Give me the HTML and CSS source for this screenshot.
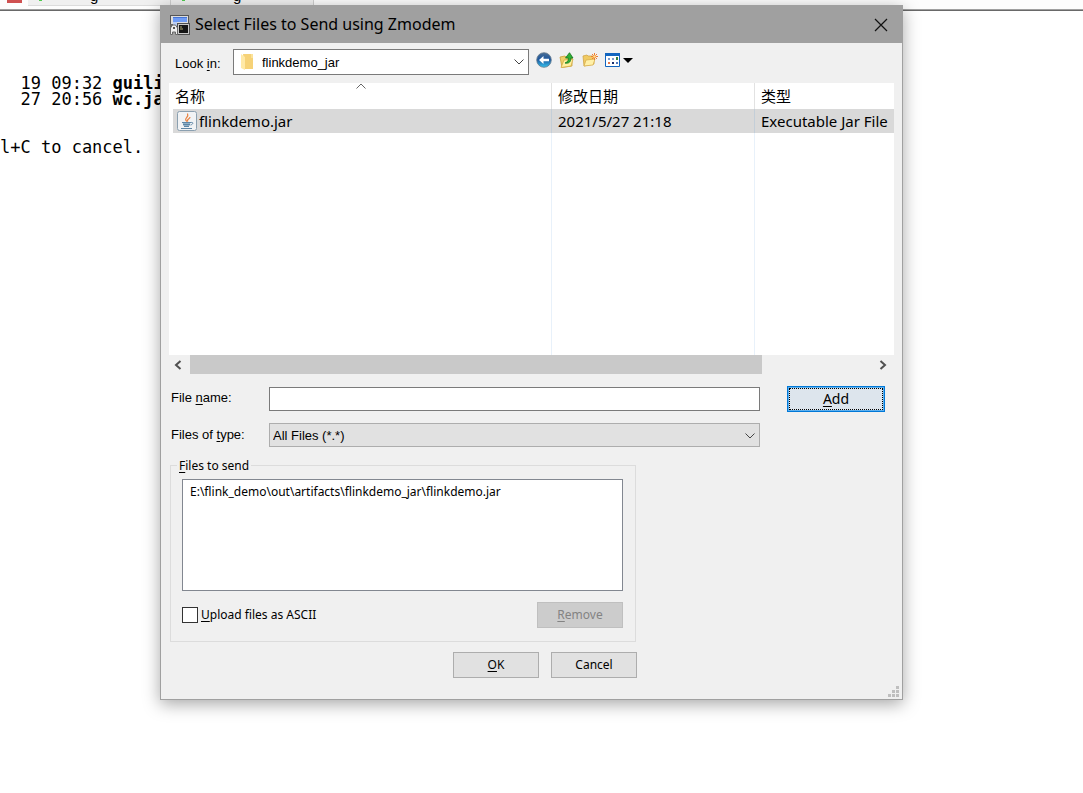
FILE: index.html
```html
<!DOCTYPE html>
<html lang="en">
<head>
<meta charset="utf-8">
<title>Select Files to Send using Zmodem</title>
<link rel="stylesheet" href="styles.css">
</head>
<body>
<div class="tabstrip" aria-hidden="true">
  <span class="stop"></span>
  <span class="tab"><i class="tick"></i><span class="tab-text">g</span></span>
  <span class="tab"><i class="tick"></i><span class="tab-text">g</span></span>
</div>
<pre class="terminal">


  19 09:32 <b>guili</b>
  27 20:56 <b>wc.ja</b>


l+C to cancel.</pre>

<section class="dialog" role="dialog" aria-labelledby="dialog-title">
  <header class="titlebar">
    <svg class="app-icon" width="20" height="20" viewBox="0 0 20 20" aria-hidden="true">
      <path d="M0 0h19v9H0z" fill="#555"/><path d="M1 1h17v8H1z" fill="#ddd"/>
      <path d="M3 2h14v5H3z" fill="#6f9cf5"/><path d="M3 2h14v1H3z" fill="#4674d6"/>
      <path d="M3 7h4v5H3z" fill="#b9cdf5"/><path d="M0 9h3v10H0z" fill="#666"/>
      <rect x="7.500" y="8.500" width="12" height="11" fill="#c9c9c9" stroke="#505050"/>
      <path d="M9 10h9v8H9z" fill="#161616"/>
      <path d="M10 12h2M10 14h3" stroke="#b3ac74"/>
      <path d="M.5 19.500V13l2-3h3l2 3v6.500h-2V17h-3v2.500z" fill="#f0f0f0" stroke="#6a6a6a"/>
      <path d="M3 12h2v2H3z" fill="#555"/>
    </svg>
    <h1 id="dialog-title">Select Files to Send using Zmodem</h1>
    <button class="close" type="button" aria-label="Close">
      <svg width="14" height="14" viewBox="0 0 14 14" aria-hidden="true"><path d="M1 1l12 12M13 1L1 13" stroke="#111" stroke-width="1.200"/></svg>
    </button>
  </header>

  <form class="body">
    <div class="look-row">
      <label for="look-in">Look <u>i</u>n:</label>
      <div class="combo">
        <select id="look-in" class="look-select"><option>flinkdemo_jar</option></select>
        <svg class="folder" width="13" height="18" viewBox="0 0 13 18" aria-hidden="true">
          <path d="M2 1h10v15H4z" fill="#f6d277"/><path d="M10 1h2v4h-2z" fill="#fbe29a"/>
          <path d="M0 1l4 3v13l-4-2z" fill="#ffe9a6"/>
        </svg>
        <svg class="chevron" width="10" height="6" viewBox="0 0 10 6" aria-hidden="true"><path d="M.5.5L5 5 9.500.5" fill="none" stroke="#444"/></svg>
      </div>
      <div class="tools">
        <button type="button" aria-label="Back">
          <svg width="16" height="16" viewBox="0 0 16 16" aria-hidden="true">
            <defs><linearGradient id="ball" x1="0" y1="0" x2="0" y2="1"><stop offset="0" stop-color="#4b6f96"/><stop offset=".45" stop-color="#1c559c"/><stop offset="1" stop-color="#35c2ef"/></linearGradient></defs>
            <circle cx="8" cy="8" r="7.300" fill="url(#ball)" stroke="#64788c" stroke-width=".8"/>
            <path d="M3 8l4.500-4v2.700H13v2.600H7.500V12z" fill="#fff"/>
          </svg>
        </button>
        <button type="button" aria-label="Up one level">
          <svg width="16" height="16" viewBox="0 0 16 16" aria-hidden="true">
            <path d="M1 5l5-1 1 1h6v9l-10 1.500z" fill="#efcf68" stroke="#c9a03a" stroke-width=".8"/>
            <path d="M2 15.500L5 8l9-1-2 7z" fill="#fff0a0" stroke="#d3ab46" stroke-width=".8"/>
            <path d="M6 11c3-1 3.500-3 3.300-5H6.500L10.500.7 14 6h-2.200c.3 3.500-1.800 6-5.800 5z" fill="#2eb135" stroke="#14731d" stroke-width=".8"/>
          </svg>
        </button>
        <button type="button" aria-label="Create new folder">
          <svg width="16" height="16" viewBox="0 0 16 16" aria-hidden="true">
            <path d="M1 4l4-1 1 1h6v8L2 14z" fill="#f0ca62" stroke="#d1a546" stroke-width=".8"/>
            <path d="M2 14l2-6 9-1-2 6z" fill="#fff0a8" stroke="#d9b04e" stroke-width=".8"/>
            <path d="M12.500 1v7M9 4.500h7M10 2l5 5M15 2l-5 5" stroke="#ef7b32"/><circle cx="12.500" cy="4.500" r="1.300" fill="#ffe28d"/>
          </svg>
        </button>
        <button type="button" class="wide" aria-label="View menu">
          <svg width="28" height="16" viewBox="0 0 28 16" aria-hidden="true">
            <path d="M.5 1.500h14v13H.5z" fill="#fff" stroke="#1265bf"/><path d="M0 1h15v3H0z" fill="#1265bf"/>
            <path d="M3 6h2v2H3zM7 6h2v2H7z" fill="#7d9bcb"/><path d="M11 5h2v3h-2z" fill="#36803f"/>
            <path d="M3 10h2v2H3z" fill="#e57749"/><path d="M7 10h2v2H7z" fill="#1b2e6d"/><path d="M11 10h2v2h-2z" fill="#5279bd"/>
            <path d="M18 6h10l-5 5z" fill="#000"/>
          </svg>
        </button>
      </div>
    </div>

    <div class="list">
      <table>
        <colgroup><col class="c-name"><col class="c-date"><col></colgroup>
        <thead lang="zh"><tr><th>名称</th><th>修改日期</th><th>类型</th></tr></thead>
        <tbody>
          <tr class="file"><td><span class="file-name">
            <svg width="20" height="20" viewBox="0 0 20 20" aria-hidden="true">
              <rect x=".5" y=".5" width="19" height="19" rx="2" fill="#f1f3f5" stroke="#8ba0b0"/>
              <path d="M10 10.500c-4-3 2.500-4 .5-8M11 10.500c-2-2 2-2.500 2-4.500" fill="none" stroke="#e9813e" stroke-width="1.200"/>
              <path d="M5.500 11h8l-1 4h-6z" fill="#8fb0c8"/>
              <path d="M5 11.500h9M6 13.500h7M7 15.500h5M4 17.500h11M14 11.500c3-.5 2 2-.5 2.500" fill="none" stroke="#5f87a6"/>
            </svg>flinkdemo.jar</span></td><td>2021/5/27 21:18</td><td>Executable Jar File</td></tr>
          <tr class="rest"><td></td><td></td><td></td></tr>
        </tbody>
      </table>
      <svg class="sort" width="10" height="6" viewBox="0 0 10 6" aria-hidden="true"><path d="M.5 5.500L5 1l4.500 4.500" fill="none" stroke="#666"/></svg>
    </div>
    <div class="scrollbar" aria-hidden="true">
      <svg width="8" height="10" viewBox="0 0 8 10"><path d="M6.500 1L2 5l4.500 4" fill="none" stroke="#505050" stroke-width="2"/></svg>
      <div class="track"><div class="thumb"></div></div>
      <svg width="8" height="10" viewBox="0 0 8 10"><path d="M1.500 1L6 5 1.500 9" fill="none" stroke="#505050" stroke-width="2"/></svg>
    </div>

    <div class="fields">
      <label for="file-name">File <u>n</u>ame:</label>
      <input id="file-name" type="text">
      <button class="btn add" type="button"><span><u>A</u>dd</span></button>
      <label for="file-type">Files of <u>t</u>ype:</label>
      <div class="combo">
        <select id="file-type" class="type-select"><option>All Files (*.*)</option></select>
        <svg class="chevron" width="10" height="6" viewBox="0 0 10 6" aria-hidden="true"><path d="M.5.5L5 5 9.500.5" fill="none" stroke="#444"/></svg>
      </div>
    </div>

    <div class="lower">
      <fieldset>
        <legend><u>F</u>iles to send</legend>
        <select class="queue" size="5" aria-label="Files to send">
          <option>E:\flink_demo\out\artifacts\flinkdemo_jar\flinkdemo.jar</option>
        </select>
        <div class="queue-actions">
          <label class="ascii"><input type="checkbox"><span><u>U</u>pload files as ASCII</span></label>
          <button class="btn" type="button" disabled><span><u>R</u>emove</span></button>
        </div>
      </fieldset>
      <div class="actions">
        <button class="btn" type="submit"><span><u>O</u>K</span></button>
        <button class="btn" type="button">Cancel</button>
      </div>
    </div>
  </form>
  <svg class="grip" width="11" height="11" viewBox="0 0 11 11" aria-hidden="true"><path d="M8 0h3v3H8zM4 4h3v3H4zM8 4h3v3H8zM0 8h3v3H0zM4 8h3v3H4zM8 8h3v3H8z" fill="#bfbfbf"/></svg>
</section>
</body>
</html>
```
FILE: styles.css
```css
* { box-sizing: border-box; }

body {
  margin: 0;
  min-height: 100vh;
  position: relative;
  background: #fff;
  color: #000;
  font: 13px/16px "Liberation Sans", Arial, sans-serif;
}

button, input, select { font: inherit; color: inherit; margin: 0; border-radius: 0; }
u { text-underline-offset: 2px; text-decoration-skip-ink: none; }

.tabstrip {
  display: flex;
  height: 11px;
  padding-left: 7px;
  background: #fdfdfd;
  border-bottom: 1px solid #696969;
  box-shadow: inset 0 -1px #a0a0a0;
  overflow: hidden;
}
.stop { width: 15px; height: 3px; margin-right: 6px; background: #cf5151; }
.tab {
  display: flex;
  width: 143px;
  height: 6px;
  background: #f0f0f0;
  border-right: 1px solid #cfcfcf;
  border-bottom: 1px solid #dcdcdc;
}
.tick { width: 3px; height: 1px; margin-left: 11px; background: #4fcb4f; }
.tab-text { margin: -12px 0 0 48px; font-size: 15px; }

.terminal {
  margin: 0;
  padding: 32px 0 0;
  font: 17px/16px "DejaVu Sans Mono", monospace;
}

.dialog {
  position: absolute;
  top: 5px;
  left: 160px;
  right: 180px;
  min-width: 700px;
  background: #f0f0f0;
  border: 1px solid #a0a0a0;
  box-shadow: 0 4px 16px rgba(0, 0, 0, .35);
}

.titlebar {
  display: flex;
  align-items: center;
  height: 37px;
  padding-left: 9px;
  background: #a0a0a0;
}
.titlebar h1 {
  flex: 1;
  margin: 0 0 0 5px;
  font: 16px/20px "Noto Sans", sans-serif;
  padding-bottom: 2px;
}
.close {
  display: flex;
  align-items: center;
  justify-content: center;
  width: 42px;
  height: 35px;
  padding: 0;
  background: none;
  border: 0;
}

.body { padding: 6px 8px 21px; }

.look-row { display: flex; align-items: center; height: 26px; }
.look-row > label { width: 64px; padding: 3px 0 0 6px; }
.look-row .combo { width: 296px; }
.combo { position: relative; display: flex; }
.combo select { width: 100%; appearance: none; outline: 0; }
.look-select { height: 26px; padding: 1px 28px 0; background: #fff; border: 1px solid #7a7a7a; }
.type-select { height: 24px; padding: 1px 3px 0; background: #e1e1e1; border: 1px solid #adadad; }
.folder { position: absolute; left: 8px; top: 4px; pointer-events: none; }
.chevron { position: absolute; right: 5px; top: 10px; pointer-events: none; }
.tools { display: flex; gap: 7px; margin: 0 0 4px 7px; }
.tools button { display: flex; padding: 0; background: none; border: 0; }

.list {
  position: relative;
  margin-top: 8px;
  padding-left: 4px;
  background: #fff;
  overflow: hidden;
}
table { width: 100%; table-layout: fixed; border-collapse: separate; border-spacing: 0; }
.c-name { width: 379px; }
.c-date { width: 203px; }
th, td {
  padding: 0 0 0 6px;
  text-align: left;
  font: 15px/24px "Noto Sans", "Noto Sans CJK SC", sans-serif;
  white-space: nowrap;
}
th { height: 26px; border-right: 1px solid #e2e2e2; }
th:first-child { padding-left: 2px; }
td { height: 24px; border-right: 1px solid #e8f1fa; }
th:last-child, td:last-child { border-right: 0; }
.file td { background: #d9d9d9; border-right-color: #c3ced8; }
td:first-child { padding-left: 4px; }
.file-name { display: flex; align-items: center; gap: 2px; }
.rest td { height: 222px; }
.sort { position: absolute; left: 187px; top: 0; }

.scrollbar { display: flex; align-items: center; height: 19px; padding: 0 7px 0 5px; }
.track { flex: 1; height: 19px; margin-left: 8px; }
.thumb { width: 83%; height: 19px; background: #c9c9c9; }

.fields {
  display: grid;
  grid-template-columns: 96px minmax(0, 1fr) 98px;
  row-gap: 11px;
  align-items: center;
  margin: 12px 9px 0 2px;
}
.fields label { align-self: start; padding-top: 4px; }
.fields input, .fields .combo { margin: 0 27px 0 2px; }
.fields input { height: 24px; padding: 0 3px; background: #fff; border: 1px solid #7a7a7a; outline: 0; }

.btn {
  height: 26px;
  width: 86px;
  padding: 0;
  background: #e1e1e1;
  border: 1px solid #adadad;
  font: 12px/16px "Noto Sans", sans-serif;
}
.btn:disabled { background: #ccc; border-color: #bfbfbf; color: #838383; }
.add {
  background: #dde5ed;
  border-color: #0078d7;
  box-shadow: inset 0 0 0 1px #5fb0ee;
  outline: 1px dotted #000;
  outline-offset: -3px;
  width: 98px;
  font-size: 14px;
}

.lower { width: calc(100% - 257px); margin-top: 10px; font: 12px/16px "Noto Sans", sans-serif; }
fieldset { min-width: 0; margin: 0 1px; padding: 6px 12px 13px 11px; border: 1px solid #dcdcdc; }
legend { margin-left: -5px; padding: 1px 2px 0; line-height: 15px; }
.queue {
  display: block;
  width: 100%;
  height: 112px;
  padding: 3px 0;
  background: #fff;
  border: 1px solid #828790;
  outline: 0;
  overflow: hidden;
}
.queue option { padding: 0 7px; min-height: 16px; }
.queue-actions { display: flex; align-items: center; justify-content: space-between; margin-top: 11px; }
.ascii { display: flex; align-items: center; gap: 3px; }
.ascii input { appearance: none; width: 16px; height: 16px; background: #fff; border: 1px solid #333; }
.actions { display: flex; justify-content: flex-end; gap: 12px; margin-top: 10px; }

.grip { position: absolute; right: 3px; bottom: 2px; }
```
